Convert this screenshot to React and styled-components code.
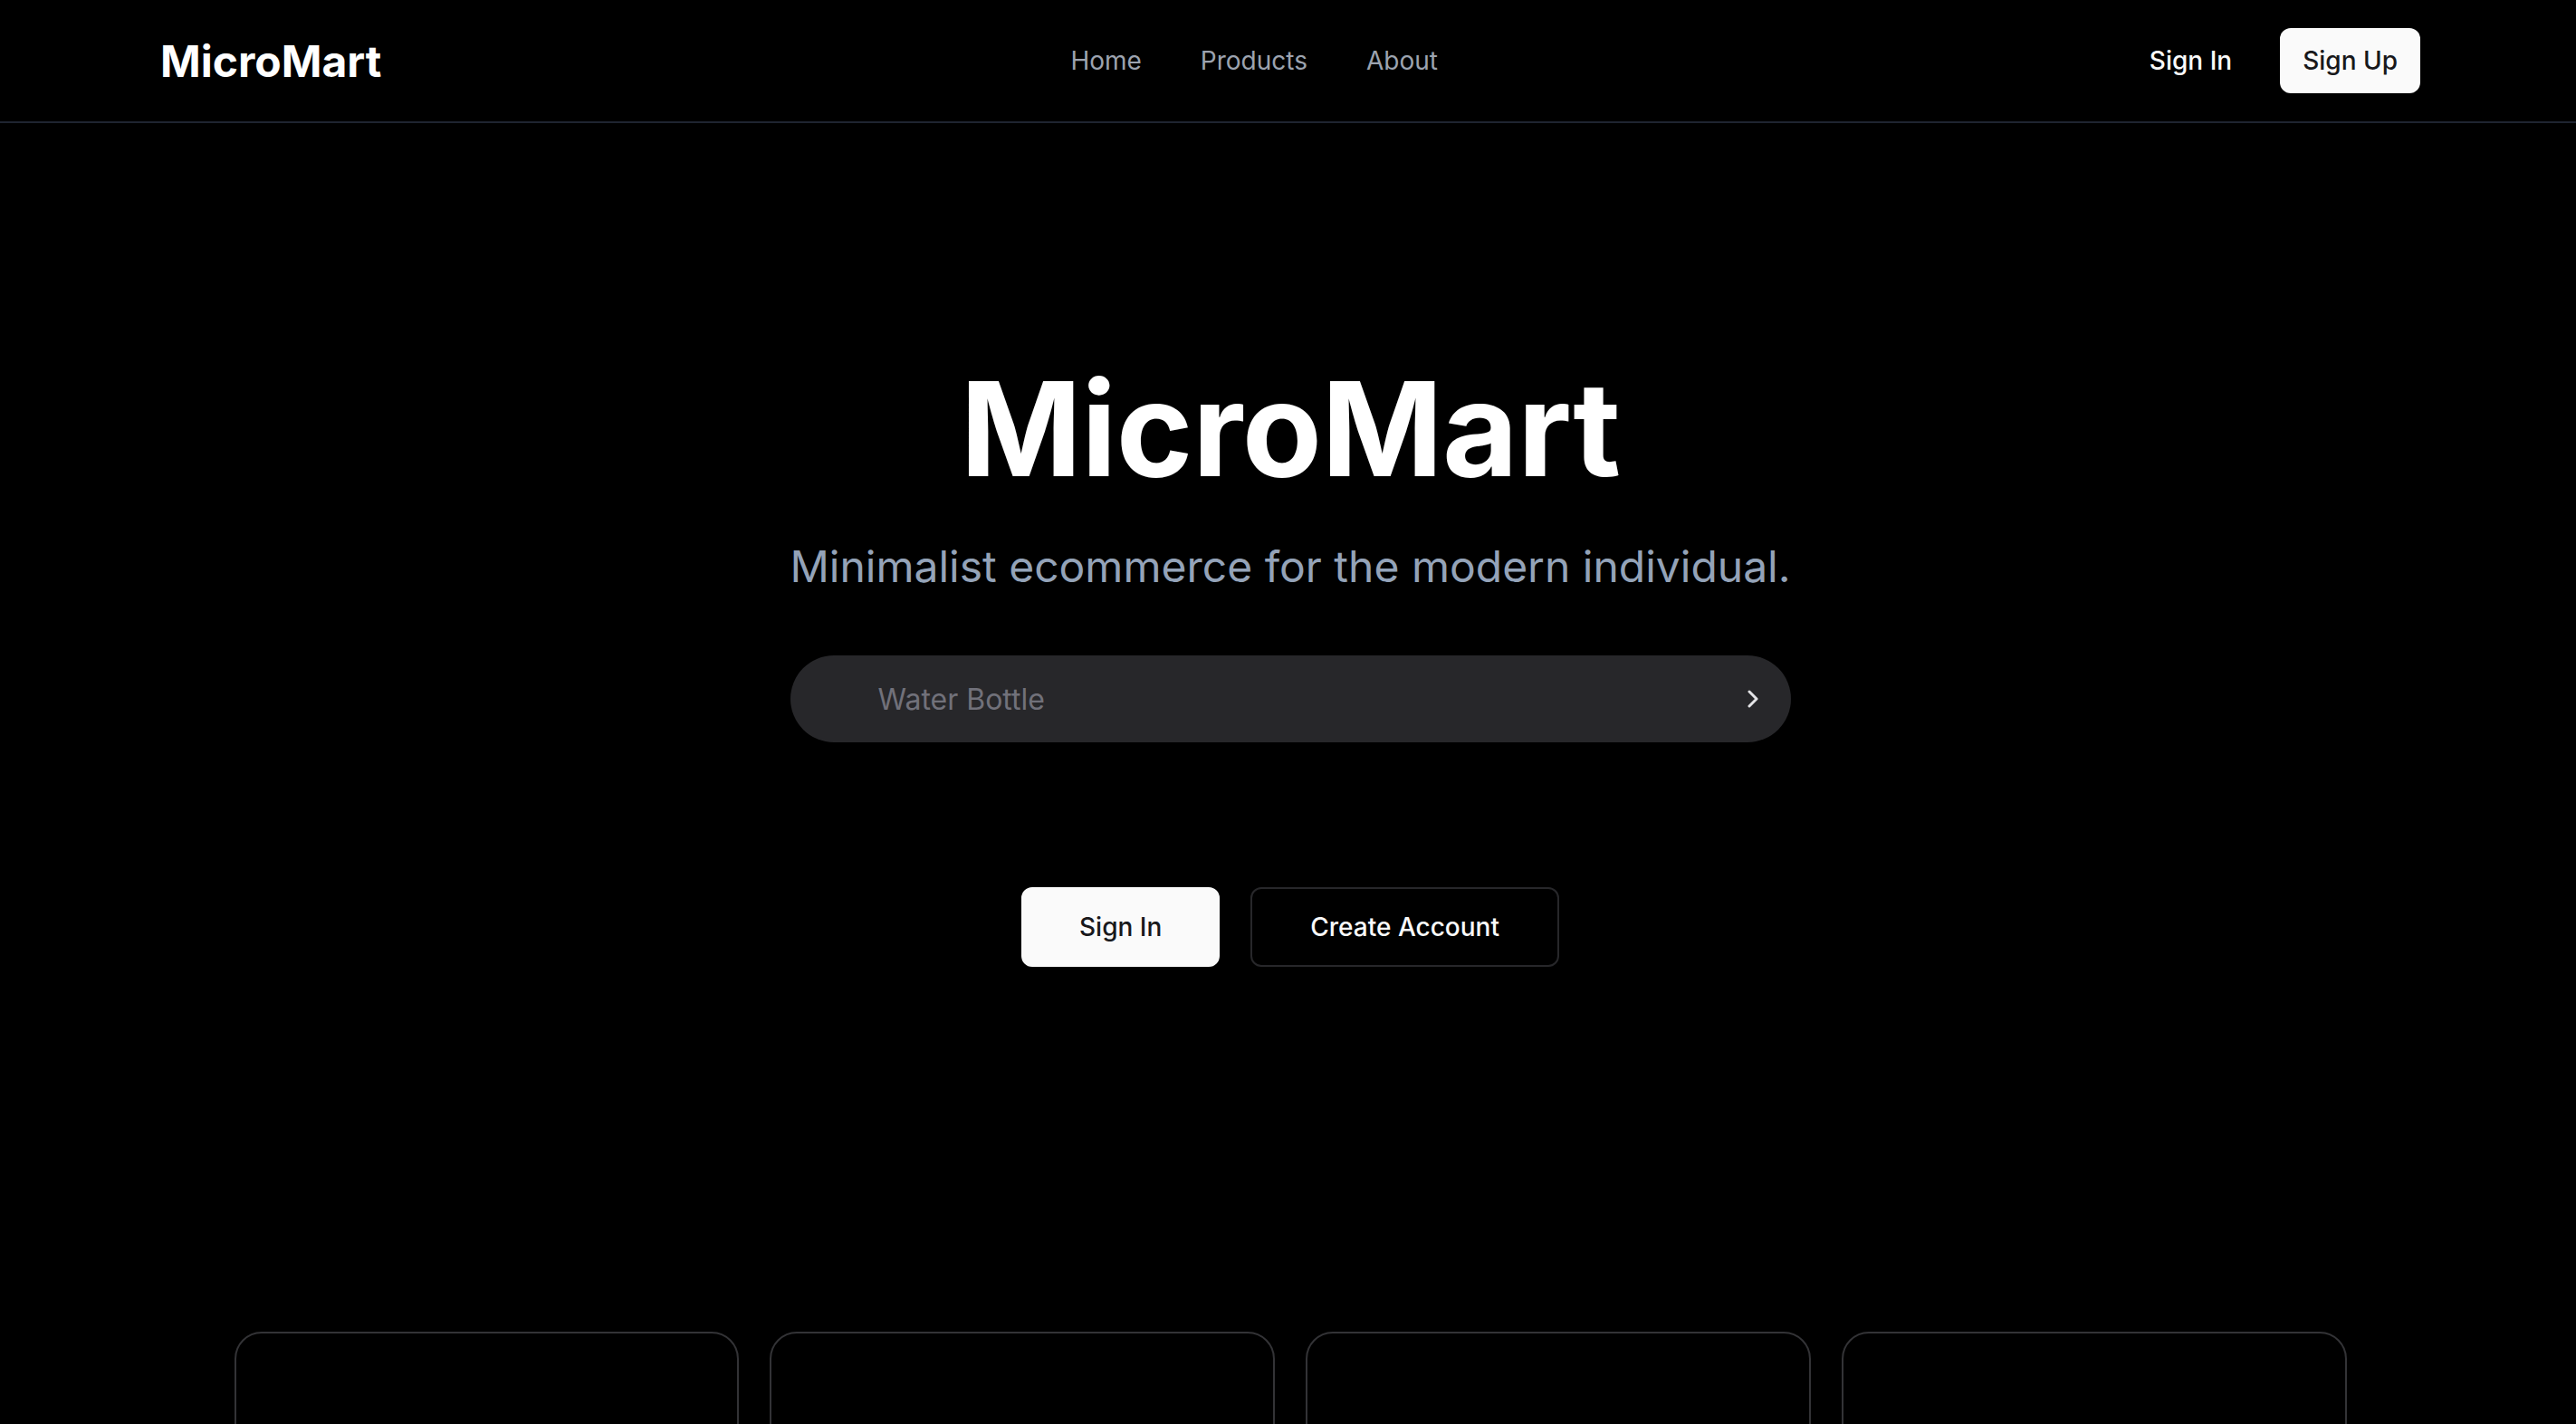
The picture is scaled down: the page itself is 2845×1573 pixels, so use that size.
import React from "react";
import styled, { createGlobalStyle } from "styled-components";

const Global = createGlobalStyle`
  * { box-sizing: border-box; }
  html, body { margin: 0; padding: 0; background: #000; }
  body { font-family: Inter, "Liberation Sans", sans-serif; color: #fafafa; }
  button, input { font-family: inherit; }
`;

const Page = styled.div`
  min-height: 100vh;
  background: #000;
`;

const Header = styled.header`
  height: 136px;
  border-bottom: 2px solid #1f2430;
  display: flex;
  align-items: center;
  justify-content: space-between;
  padding: 0 172px 0 177px;
`;

const Logo = styled.div`
  font-size: 48px;
  font-weight: 700;
  color: #fff;
`;

const Nav = styled.nav`
  display: flex;
  gap: 65px;
`;

const NavLink = styled.a`
  font-size: 28px;
  color: #9ca3af;
  text-decoration: none;
`;

const Actions = styled.div`
  display: flex;
  align-items: center;
  gap: 28px;
`;

const HeaderButton = styled.button`
  height: 72px;
  padding: 0 25px;
  border-radius: 12px;
  border: none;
  font-size: 28px;
  font-weight: 500;
  background: ${(p) => (p.$primary ? "#fafafa" : "transparent")};
  color: ${(p) => (p.$primary ? "#18181b" : "#fafafa")};
`;

const Hero = styled.section`
  display: flex;
  flex-direction: column;
  align-items: center;
  padding: 266px 0 0 5px;
`;

const Title = styled.h1`
  margin: 0;
  font-size: 144px;
  line-height: 1;
  font-weight: 700;
  letter-spacing: -0.5px;
  color: #fff;
`;

const Subtitle = styled.p`
  margin: 52px 0 0;
  font-size: 48px;
  line-height: 56px;
  color: #94a3b8;
`;

const Search = styled.div`
  margin-top: 70px;
  width: 1105px;
  height: 96px;
  border-radius: 48px;
  background: #27272a;
  display: flex;
  align-items: center;
  padding: 0 34px 0 95px;
`;

const SearchInput = styled.input`
  flex: 1;
  background: transparent;
  border: none;
  outline: none;
  font-size: 32px;
  color: #fafafa;
  &::placeholder { color: #71717a; }
`;

const Buttons = styled.div`
  margin-top: 160px;
  display: flex;
  gap: 34px;
`;

const CtaButton = styled.button`
  height: 88px;
  padding: 0 ${(p) => (p.$primary ? "62px" : "64px")};
  border-radius: 12px;
  font-size: 28px;
  font-weight: 500;
  border: 2px solid ${(p) => (p.$primary ? "#fafafa" : "#27272a")};
  background: ${(p) => (p.$primary ? "#fafafa" : "#000")};
  color: ${(p) => (p.$primary ? "#18181b" : "#fafafa")};
`;

const Cards = styled.div`
  margin: 403px auto 0;
  width: 2333px;
  display: grid;
  grid-template-columns: repeat(4, 1fr);
  gap: 34px;
`;

const Card = styled.div`
  height: 520px;
  border: 2px solid #333336;
  border-radius: 30px;
`;

const Chevron = () => (
  <svg width="16" height="22" viewBox="0 0 16 22" fill="none">
    <path d="M4 3 L12 11 L4 19" stroke="#e4e4e7" strokeWidth="3" strokeLinecap="round" strokeLinejoin="round" />
  </svg>
);

export default function App() {
  return (
    <Page>
      <Global />
      <Header>
        <Logo>MicroMart</Logo>
        <Nav>
          <NavLink href="#">Home</NavLink>
          <NavLink href="#">Products</NavLink>
          <NavLink href="#">About</NavLink>
        </Nav>
        <Actions>
          <HeaderButton>Sign In</HeaderButton>
          <HeaderButton $primary>Sign Up</HeaderButton>
        </Actions>
      </Header>
      <Hero>
        <Title>MicroMart</Title>
        <Subtitle>Minimalist ecommerce for the modern individual.</Subtitle>
        <Search>
          <SearchInput placeholder="Water Bottle" />
          <Chevron />
        </Search>
        <Buttons>
          <CtaButton $primary>Sign In</CtaButton>
          <CtaButton>Create Account</CtaButton>
        </Buttons>
        <Cards>
          <Card />
          <Card />
          <Card />
          <Card />
        </Cards>
      </Hero>
    </Page>
  );
}
